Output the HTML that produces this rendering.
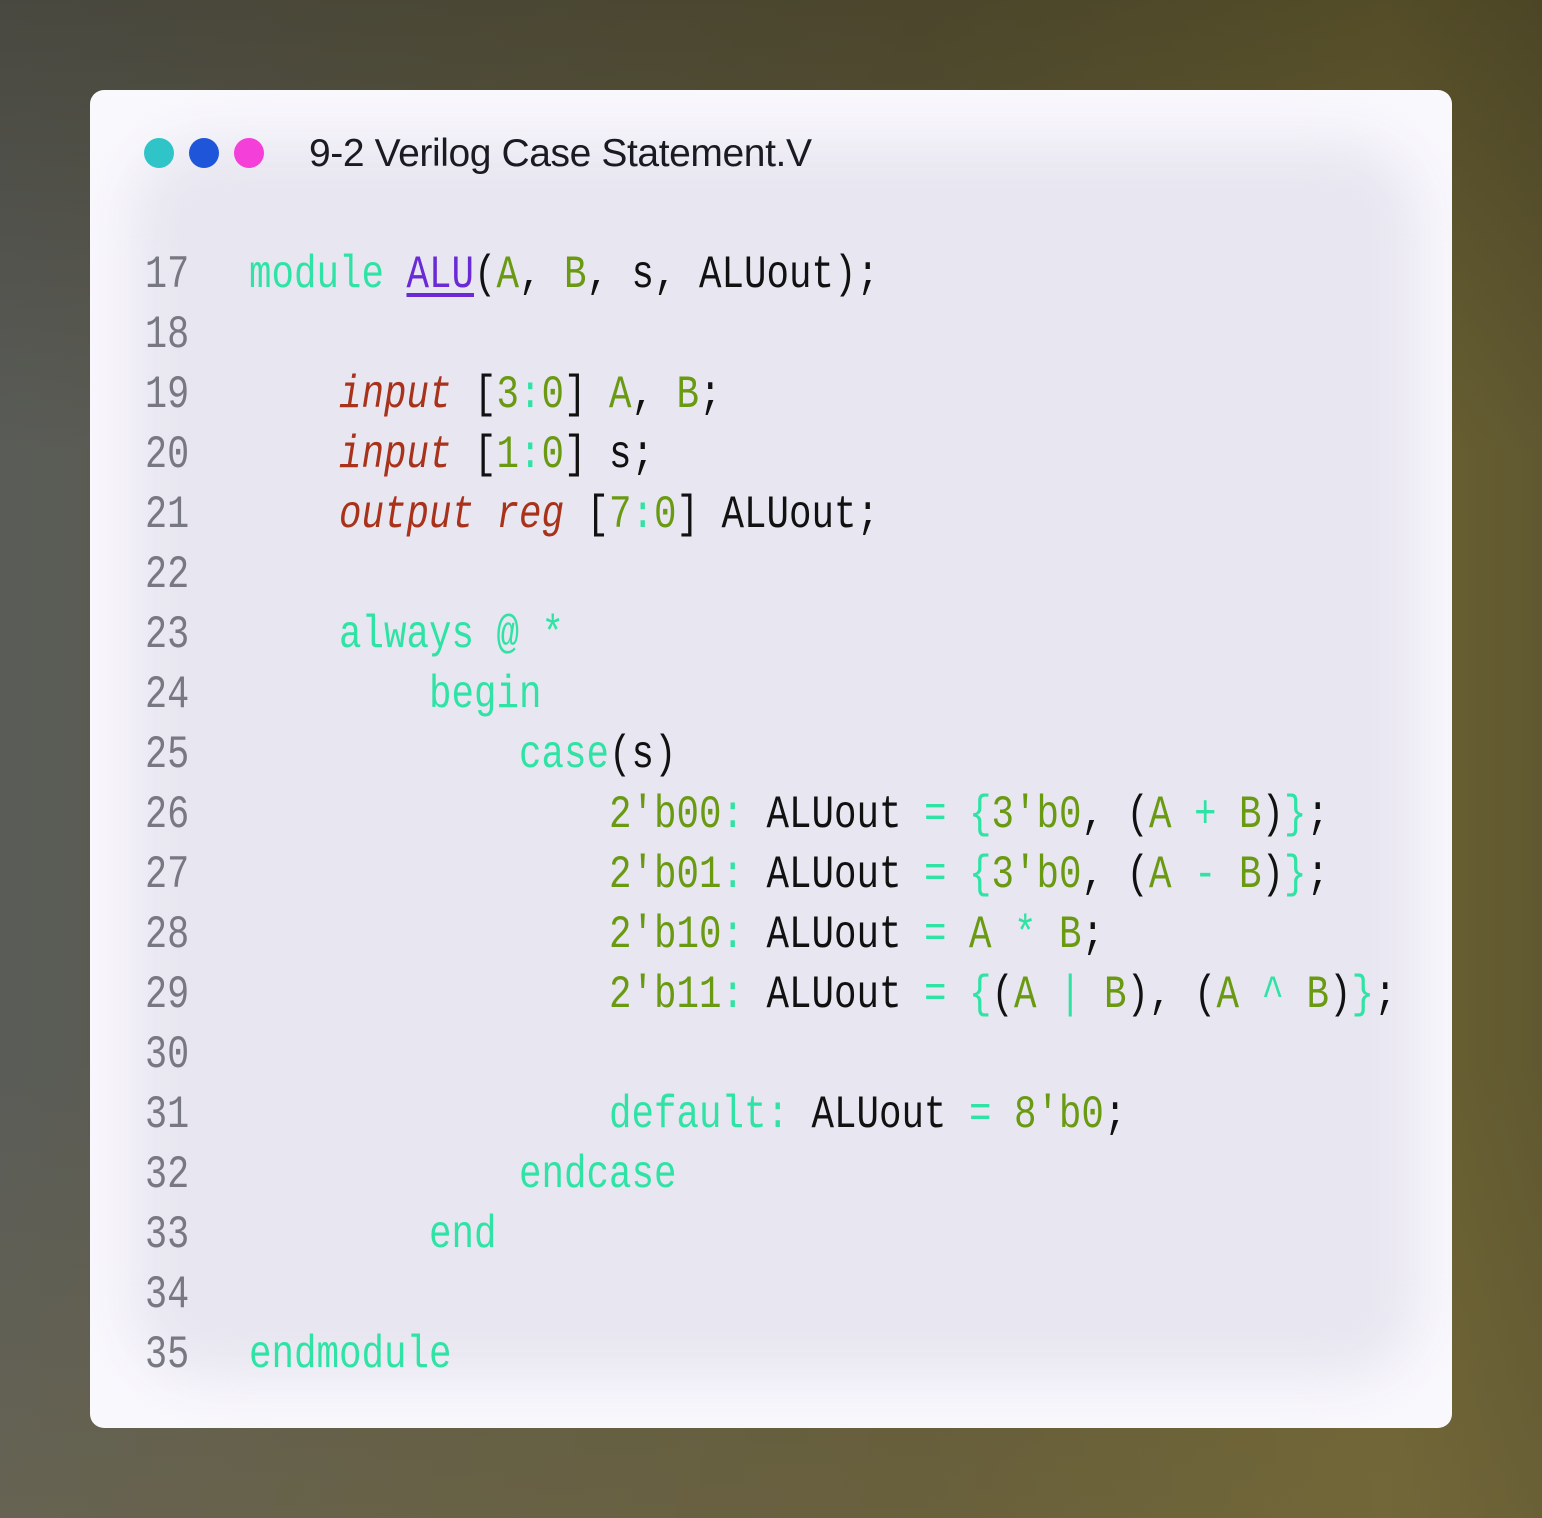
<!DOCTYPE html>
<html><head><style>
html,body{margin:0;padding:0}
body{width:1542px;height:1518px;position:relative;overflow:hidden;
background:linear-gradient(90deg,#5a5c58 0%,#5c5a48 25%,#5e5838 60%,#6b6232 90%,#605830 100%);}
.bgtop{position:absolute;left:0;top:0;width:1542px;height:1518px;
background:linear-gradient(180deg,rgba(40,36,20,.35) 0%,rgba(0,0,0,0) 30%,rgba(0,0,0,0) 70%,rgba(130,115,70,.3) 100%);}
.card{position:absolute;left:90px;top:90px;width:1362px;height:1338px;border-radius:14px;background:#f9f8fd;overflow:hidden}
.inner{position:absolute;left:40px;top:50px;width:1290px;height:1240px;border-radius:80px;background:#e8e6f0;filter:blur(25px)}
.dot{position:absolute;top:138px;width:30px;height:30px;border-radius:50%}
.title{position:absolute;left:309px;top:132px;font-family:"Liberation Sans",sans-serif;font-size:39px;color:#1a1a22;letter-spacing:-0.4px}
.ln{position:absolute;left:145px;font-family:"Liberation Mono",monospace;font-size:46px;color:#787882;transform:scaleX(.8);transform-origin:left;line-height:60px}
.code{position:absolute;left:249px;font-family:"Liberation Mono",monospace;font-size:46px;color:#111;white-space:pre;transform:scaleX(.815);transform-origin:left;line-height:60px}
.k{color:#2fe3a5}.g{color:#6a9a12}.r{color:#a8321a;font-style:italic}.p{color:#6a2bd4;text-decoration:underline;text-underline-offset:6px}
</style></head><body>
<div class="bgtop"></div>
<div class="card"><div class="inner"></div></div>
<div class="dot" style="left:144px;background:#2fc4c8"></div>
<div class="dot" style="left:189px;background:#1f55d8"></div>
<div class="dot" style="left:234px;background:#f43fd8"></div>
<div class="title">9-2 Verilog Case Statement.V</div>

<div class="ln" style="top:245px">17<br>18<br>19<br>20<br>21<br>22<br>23<br>24<br>25<br>26<br>27<br>28<br>29<br>30<br>31<br>32<br>33<br>34<br>35</div>
<div class="code" style="top:245px"><span class="k">module</span> <span class="p">ALU</span>(<span class="g">A</span>, <span class="g">B</span>, s, ALUout);

    <span class="r">input</span> [<span class="g">3</span><span class="k">:</span><span class="g">0</span>] <span class="g">A</span>, <span class="g">B</span>;
    <span class="r">input</span> [<span class="g">1</span><span class="k">:</span><span class="g">0</span>] s;
    <span class="r">output</span> <span class="r">reg</span> [<span class="g">7</span><span class="k">:</span><span class="g">0</span>] ALUout;

    <span class="k">always @ *</span>
        <span class="k">begin</span>
            <span class="k">case</span>(s)
                <span class="g">2'b00</span><span class="k">:</span> ALUout <span class="k">=</span> <span class="k">{</span><span class="g">3'b0</span>, (<span class="g">A</span> <span class="k">+</span> <span class="g">B</span>)<span class="k">}</span>;
                <span class="g">2'b01</span><span class="k">:</span> ALUout <span class="k">=</span> <span class="k">{</span><span class="g">3'b0</span>, (<span class="g">A</span> <span class="k">-</span> <span class="g">B</span>)<span class="k">}</span>;
                <span class="g">2'b10</span><span class="k">:</span> ALUout <span class="k">=</span> <span class="g">A</span> <span class="k">*</span> <span class="g">B</span>;
                <span class="g">2'b11</span><span class="k">:</span> ALUout <span class="k">=</span> <span class="k">{</span>(<span class="g">A</span> <span class="k">|</span> <span class="g">B</span>), (<span class="g">A</span> <span class="k">^</span> <span class="g">B</span>)<span class="k">}</span>;

                <span class="k">default:</span> ALUout <span class="k">=</span> <span class="g">8'b0</span>;
            <span class="k">endcase</span>
        <span class="k">end</span>

<span class="k">endmodule</span></div>
</body></html>
